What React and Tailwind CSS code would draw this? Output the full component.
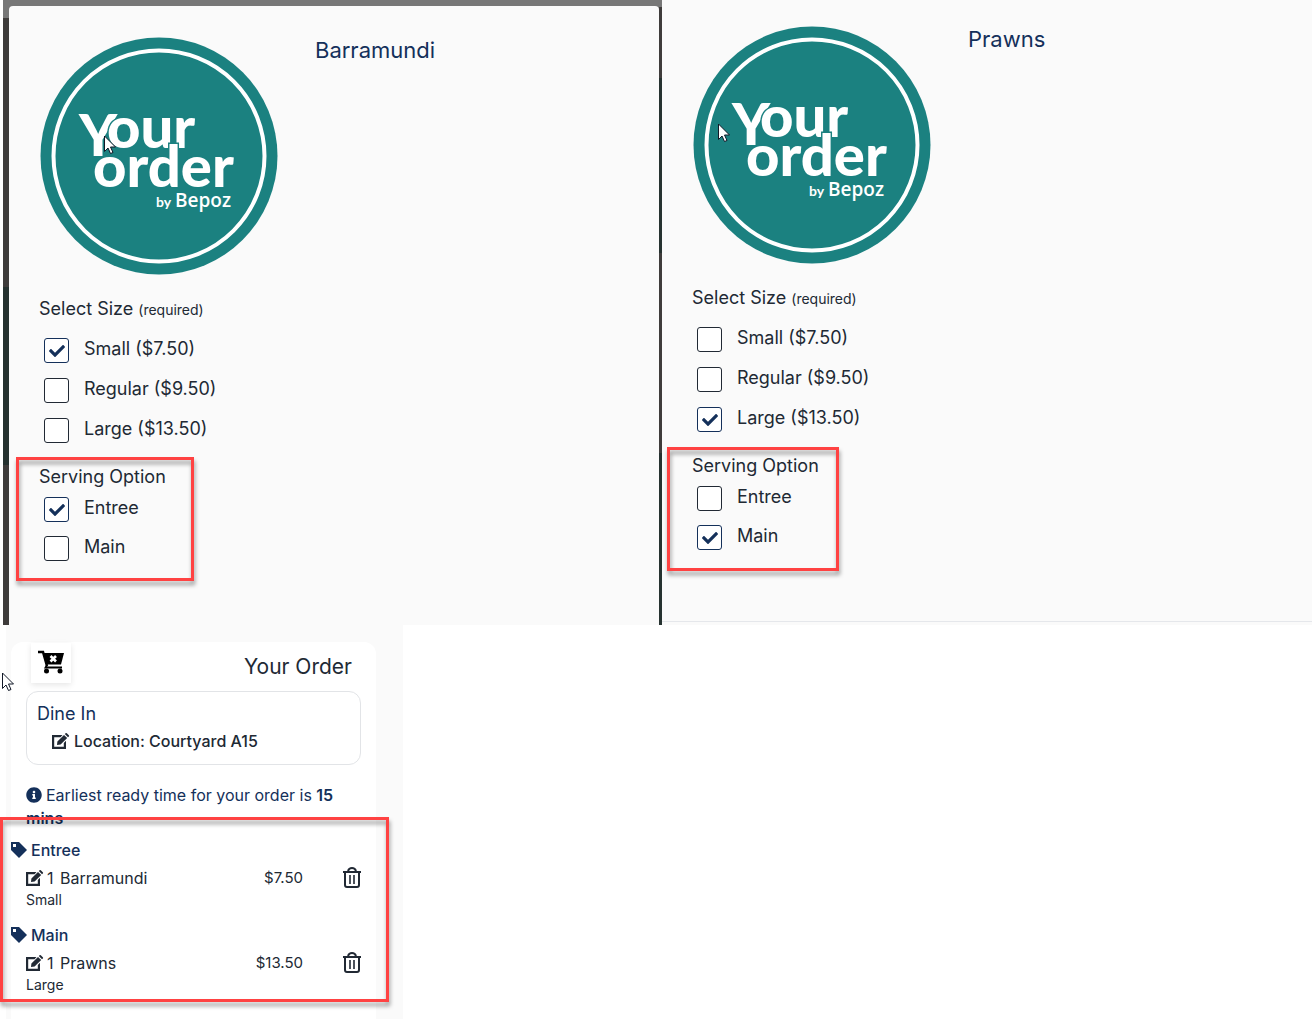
import React from "react";
import { FaCheck, FaInfoCircle } from "react-icons/fa";

const sizes = ["Small ($7.50)", "Regular ($9.50)", "Large ($13.50)"];
const servings = ["Entree", "Main"];

const orderLines = [
  { course: "Entree", qty: 1, name: "Barramundi", price: "$7.50", size: "Small" },
  { course: "Main", qty: 1, name: "Prawns", price: "$13.50", size: "Large" },
];

function Cursor({ className }) {
  return (
    <svg
      className={`absolute w-3 h-5 ${className}`}
      viewBox="0 0 12 20"
      fill="#fff"
      stroke="#111827"
      aria-hidden="true"
    >
      <path d="M.5 1v15.500l3.500-3.500 2.500 5.500 2.500-1-2.500-5.500h5z" />
    </svg>
  );
}

function Logo() {
  return (
    <svg
      className="w-60 h-60 shrink-0"
      viewBox="0 0 240 240"
      fontFamily="Lato, sans-serif"
      fill="#fff"
      role="img"
      aria-label="Your Order by Bepoz"
    >
      <circle cx="120" cy="120" r="118.500" fill="#1b8180" />
      <circle cx="120" cy="120" r="105.500" fill="none" stroke="#fff" strokeWidth="4" />
      {/* the teal outline cuts each word out of the one behind it */}
      <g fontSize="58" fontWeight="900" stroke="#1b8180" strokeWidth="3" paintOrder="stroke">
        <text x="40" y="120">Y</text>
        <text x="68" y="112">our</text>
        <text x="54" y="151">order</text>
      </g>
      <text x="117" y="171" fontSize="14" fontWeight="700">by</text>
      <text x="136" y="171" fontSize="19" fontWeight="600" fontFamily="'Open Sans', sans-serif">
        Bepoz
      </text>
    </svg>
  );
}

function CartRemoveIcon() {
  return (
    <svg className="w-7 h-7" viewBox="0 0 28 28" aria-hidden="true">
      <path d="M1 3h5l4 14" fill="none" stroke="#000" strokeWidth="2.500" />
      <path d="M6 4h21l-3 11.500H9z" />
      <path d="M10 16l-1.500 2.500H25" fill="none" stroke="#000" strokeWidth="1.800" />
      <circle cx="9.500" cy="22" r="2.500" />
      <circle cx="23" cy="22" r="2.500" />
      <path d="M13.500 7l5.500 5.500m0-5.500l-5.500 5.500" stroke="#fff" strokeWidth="2.600" />
    </svg>
  );
}

function TrashIcon() {
  return (
    <svg
      className="w-[18px] h-[22px]"
      viewBox="0 0 18 22"
      fill="none"
      stroke="#212934"
      strokeWidth="2"
      aria-hidden="true"
    >
      <path d="M0 5h18M2 5v13q0 2 2 2h10q2 0 2-2V5M5 4q1-3 4-3t4 3" />
      <path d="M7 8v9M11 8v9" strokeWidth="1.600" />
    </svg>
  );
}

function EditIcon() {
  return (
    <svg className="w-[18px] h-4" viewBox="0 0 18 16" fill="#212934" aria-hidden="true">
      <path d="M0 2h10.500L8.500 4.200H2.200v9.600h9.600V10l2.200-2.200V16H0z" />
      <path d="M5 12l.4-3.600L12 1.900l3.200 3.200-6.600 6.500zM12.800 1.100l.8-.8q.6-.6 1.200 0l2 2q.6.6 0 1.200l-.8.8z" />
    </svg>
  );
}

function TagIcon() {
  return (
    <svg className="w-4 h-4" viewBox="0 0 16 16" fill="#14305a" aria-hidden="true">
      <path d="M0 0h8l8 8-8 8-8-8zM2 2v3h3V2z" fillRule="evenodd" />
    </svg>
  );
}

function Option({ label, defaultChecked }) {
  return (
    <label className="flex items-start">
      <span className="relative w-[25px] h-[25px] shrink-0">
        <input
          type="checkbox"
          defaultChecked={defaultChecked}
          className="peer block w-full h-full appearance-none rounded-[3px] border border-[#212934] bg-white checked:border-[#14305a]"
        />
        <FaCheck className="absolute inset-0 m-auto hidden w-4 h-4 text-[#14305a] pointer-events-none peer-checked:block" />
      </span>
      <span className="ml-[15px] text-lg leading-[21px]">{label}</span>
    </label>
  );
}

function ProductPanel({ name, size, serving, frame, cursor, className }) {
  return (
    <div className={`bg-[#fafafa] px-[30px] pb-16 ${className}`}>
      <div className="relative flex gap-9">
        <Logo />
        <h2 className="text-[22px] leading-7 text-[#14305a]">{name}</h2>
        <Cursor className={cursor} />
      </div>

      <fieldset className="mt-[21px]">
        <legend className="text-lg leading-6">
          Select Size <span className="text-sm">(required)</span>
        </legend>
        <div className="mt-[17px] ml-[5px] flex flex-col gap-[15px]">
          {sizes.map((label) => (
            <Option key={label} label={label} defaultChecked={label === size} />
          ))}
        </div>
      </fieldset>

      <fieldset className="relative mt-[22px]">
        <legend className="text-lg leading-6">Serving Option</legend>
        <div className="mt-2 ml-[5px] flex flex-col gap-[14px]">
          {servings.map((label) => (
            <Option key={label} label={label} defaultChecked={label === serving} />
          ))}
        </div>
        <Highlight className={frame} />
      </fieldset>
    </div>
  );
}

function Highlight({ className }) {
  return (
    <div
      className={`absolute border-3 border-[#ff4242] pointer-events-none drop-shadow-[1px_4px_2px_rgba(0,0,0,0.4)] ${className}`}
    />
  );
}

function OrderLine({ line }) {
  return (
    <section>
      <h3 className="-ml-[15px] flex items-center gap-1 leading-6 font-medium text-[#14305a]">
        <TagIcon />
        {line.course}
      </h3>
      <div className="mt-1 flex items-center h-6">
        <button aria-label={`Edit ${line.name}`}>
          <EditIcon />
        </button>
        <span className="ml-[3px] w-[13px]">{line.qty}</span>
        <span className="flex-1">{line.name}</span>
        <span className="text-[15px]">{line.price}</span>
        <button className="ml-10" aria-label={`Remove ${line.name}`}>
          <TrashIcon />
        </button>
      </div>
      <p className="text-sm leading-5">{line.size}</p>
    </section>
  );
}

export default function App() {
  return (
    <div className="min-h-screen flex flex-col bg-white font-['Inter',sans-serif] text-[#212934]">
      <div className="grid grid-cols-[331fr_325fr]">
        <div className="ml-[3px] flex">
          <div className="w-[6px] bg-[linear-gradient(#777_18px,#3f3c3b_18px,#3f3c3b_287px,#263230_287px,#263230_465px,#3f3c3b_465px)]" />
          <div className="flex-1 pt-[6px] bg-[#777]">
            <ProductPanel
              name="Barramundi"
              size="Small ($7.50)"
              serving="Entree"
              className="h-full rounded-t pt-[30px]"
              frame="-left-[23px] -top-8 w-[178px] h-[124px]"
              cursor="left-[65px] top-[99px]"
            />
          </div>
          <div className="w-[3px] bg-[linear-gradient(#777_7px,#3f3c3b_7px,#3f3c3b_78px,#263230_78px,#263230_253px,#3f3c3b_253px,#3f3c3b_453px,#263230_453px)]" />
        </div>
        <div className="flex flex-col bg-[#fafafa]">
          <ProductPanel
            name="Prawns"
            size="Large ($13.50)"
            serving="Main"
            className="flex-1 border-b border-[#e5e7eb] pt-[25px]"
            frame="-left-[25px] -top-[31px] w-[172px] h-[124px]"
            cursor="left-[26px] top-[98px]"
          />
          <div className="h-[3px]" />
        </div>
      </div>

      <div className="relative flex-1 flex flex-col ml-[6px] w-[397px] max-w-full bg-[#fafafa] pt-[17px] pl-[5px] pr-[27px]">
        <Cursor className="-left-1 top-[47px]" />
        <div className="flex-1 rounded-t-xl bg-white px-[15px]">
          <div className="flex items-end justify-between h-[49px] pl-[5px] pr-[9px] pb-2">
            <button
              className="flex items-center justify-center w-10 h-10 bg-white shadow-[0_2px_6px_rgba(0,0,0,0.1)]"
              aria-label="Clear order"
            >
              <CartRemoveIcon />
            </button>
            <h2 className="text-[21px] leading-8">Your Order</h2>
          </div>

          <div className="rounded-xl border border-[#e2e4e7] px-[10px] pt-[10px] pb-[11px]">
            <h3 className="text-lg leading-6 text-[#14305a]">Dine In</h3>
            <button className="mt-[3px] ml-[15px] flex items-center gap-1 leading-6 font-medium">
              <EditIcon />
              Location: Courtyard A15
            </button>
          </div>

          <p className="mt-[19px] leading-[23px] text-[#14305a]">
            <FaInfoCircle className="inline w-4 h-4 mr-1 align-[-2px]" />
            Earliest ready time for your order is <b className="font-semibold">15 mins</b>
          </p>

          <div className="mt-2 flex flex-col gap-[13px]">
            {orderLines.map((line) => (
              <OrderLine key={line.name} line={line} />
            ))}
          </div>
        </div>
        <Highlight className="-left-[6px] top-48 w-[389px] h-[185px]" />
      </div>
    </div>
  );
}
